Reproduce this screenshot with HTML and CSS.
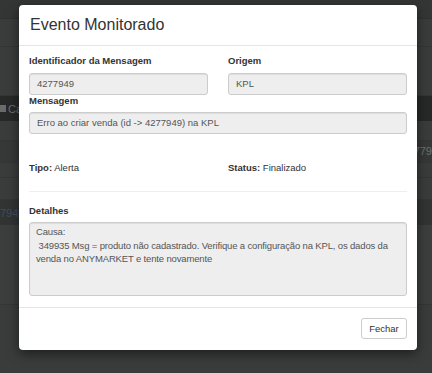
FILE: index.html
```html
<!DOCTYPE html>
<html lang="pt">
<head>
<meta charset="utf-8">
<title>Evento Monitorado</title>
<link rel="stylesheet" href="styles.css">
</head>
<body>
<div class="page">
  <div class="bg-row bg-top"></div>
  <div class="bg-row bg-a"></div>
  <div class="bg-row bg-b"></div>
  <div class="bg-row bg-toolbar"><span class="bg-chk"></span><span class="bg-btn-text">Ca</span></div>
  <div class="bg-row bg-c"></div>
  <div class="bg-row bg-d"><span class="bg-right-text">2779</span></div>
  <div class="bg-row bg-e"></div>
  <div class="bg-row bg-f"></div>
  <div class="bg-row bg-sel"><span class="bg-link">7949</span></div>
  <div class="bg-row bg-g"></div>
  <div class="bg-row bg-h"></div>
</div>

<div class="modal">
  <div class="modal-header">
    <h3 class="modal-title">Evento Monitorado</h3>
  </div>
  <div class="modal-body">
    <div class="grid first">
      <div class="field">
        <label class="lbl">Identificador da Mensagem</label>
        <div class="input">4277949</div>
      </div>
      <div class="field">
        <label class="lbl">Origem</label>
        <div class="input">KPL</div>
      </div>
    </div>
    <div class="field msg">
      <label class="lbl">Mensagem</label>
      <div class="input">Erro ao criar venda (id -&gt; 4277949) na KPL</div>
    </div>
    <div class="grid info">
      <div><b class="bold">Tipo:</b> Alerta</div>
      <div><b class="bold">Status:</b> Finalizado</div>
    </div>
    <hr class="sep">
    <div class="field det">
      <label class="lbl">Detalhes</label>
      <div class="textarea">Causa:
 349935 Msg = produto não cadastrado. Verifique a configuração na KPL, os dados da venda no ANYMARKET e tente novamente</div>
    </div>
  </div>
  <div class="modal-footer">
    <button class="btn">Fechar</button>
  </div>
</div>
</body>
</html>
```

FILE: styles.css
```css
* { box-sizing: border-box; }
html, body { margin: 0; padding: 0; }
body {
  width: 432px;
  height: 373px;
  overflow: hidden;
  background: #3b3d3d;
  font-family: "Liberation Sans", Arial, sans-serif;
  font-size: 9.5px;
  color: #333;
  position: relative;
}

/* background page under overlay */
.page { display: flex; flex-direction: column; }
.bg-row { border-bottom: 1px solid #343636; position: relative; }
.bg-top { height: 19px; background: #343636; border-bottom-color: #2f3131; }
.bg-a { height: 28px; background: #3a3c3c; }
.bg-b { height: 49px; background: #3a3c3c; }
.bg-toolbar { height: 25px; background: #272828; border-bottom: none; display: flex; align-items: center; gap: 2px; }
.bg-chk { width: 6px; height: 7px; background: #6a6a6a; }
.bg-btn-text { color: #6f7070; font-size: 11px; }
.bg-c { height: 20px; background: #3a3c3c; }
.bg-d { height: 22px; background: #363838; }
.bg-right-text { position: absolute; right: 0; top: 4px; color: #707272; font-size: 11px; }
.bg-e { height: 15px; background: #3a3c3c; }
.bg-f { height: 22px; background: #3a3c3c; }
.bg-sel { height: 25px; background: #323434; border-bottom: none; display: flex; align-items: center; }
.bg-link { color: #3d4d5e; font-size: 11px; }
.bg-g { height: 80px; background: #3c3e3e; border-bottom-color: #353737; }
.bg-h { height: 68px; background: #3a3c3c; border-bottom: none; }

/* modal */
.modal {
  position: absolute;
  left: 19px;
  top: 5px;
  width: 398px;
  height: 345px;
  background: #fff;
  border-radius: 4px;
  box-shadow: 0 4px 12px rgba(0, 0, 0, 0.5);
  display: flex;
  flex-direction: column;
}
.modal-header {
  height: 41px;
  border-bottom: 1px solid #e5e5e5;
  padding: 0 11px;
  display: flex;
  align-items: center;
}
.modal-title {
  margin: 0;
  font-size: 16px;
  font-weight: normal;
  color: #333;
  line-height: 20px;
}
.modal-body {
  padding: 9px 10px 10px;
  flex: 1;
}
.grid {
  display: grid;
  grid-template-columns: 1fr 1fr;
  column-gap: 20px;
}
.field { display: flex; flex-direction: column; }
.lbl {
  font-weight: bold;
  line-height: 12px;
  margin-bottom: 6px;
  color: #333;
}
.msg .lbl { margin-bottom: 5px; }
.input {
  height: 22px;
  line-height: 20px;
  padding: 0 7px;
  background: #eee;
  border: 1px solid #ccc;
  border-radius: 3px;
  color: #555;
  box-shadow: inset 0 1px 1px rgba(0, 0, 0, 0.075);
  white-space: nowrap;
}
.info { margin-top: 28px; line-height: 12px; }
.bold { font-weight: bold; }
.sep {
  margin: 17px 0 0;
  border: 0;
  border-top: 1px solid #eee;
}
.det { margin-top: 13px; }
.det .lbl { margin-bottom: 5px; }
.textarea {
  height: 74px;
  padding: 2px 6px;
  background: #eee;
  border: 1px solid #ccc;
  border-radius: 3px;
  color: #555;
  line-height: 13.5px;
  letter-spacing: -0.15px;
  white-space: pre-wrap;
  box-shadow: inset 0 1px 1px rgba(0, 0, 0, 0.075);
}
.modal-footer {
  border-top: 1px solid #e5e5e5;
  padding: 10px 10px 11px;
  display: flex;
  justify-content: flex-end;
}
.btn {
  width: 46px;
  height: 21px;
  padding: 0;
  background: #fff;
  border: 1px solid #ccc;
  border-radius: 3px;
  font-family: "Liberation Sans", Arial, sans-serif;
  font-size: 9.5px;
  color: #333;
}
```
